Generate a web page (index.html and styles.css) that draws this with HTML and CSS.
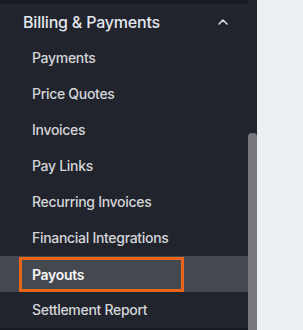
FILE: index.html
```html
<!DOCTYPE html>
<html>
<head>
<meta charset="utf-8">
<link rel="stylesheet" href="styles.css">
</head>
<body>
<div class="page">
  <aside class="sidebar">
    <div class="content">
      <div class="topband"></div>
      <div class="section-head">
        <span class="section-title">Billing &amp; Payments</span>
        <svg class="chev" width="10" height="6" viewBox="0 0 10 6"><path d="M1 5 L5 1 L9 5" fill="none" stroke="#d8dbe0" stroke-width="1.6" stroke-linecap="round" stroke-linejoin="round"/></svg>
      </div>
      <ul class="items">
        <li class="item"><span class="label">Payments</span></li>
        <li class="item"><span class="label">Price Quotes</span></li>
        <li class="item"><span class="label">Invoices</span></li>
        <li class="item"><span class="label">Pay Links</span></li>
        <li class="item"><span class="label">Recurring Invoices</span></li>
        <li class="item"><span class="label">Financial Integrations</span></li>
        <li class="item active"><span class="label boxed">Payouts</span></li>
        <li class="item"><span class="label">Settlement Report</span></li>
      </ul>
      <div class="bottomband"></div>
    </div>
    <div class="track"><div class="thumb"></div></div>
  </aside>
  <main class="main"></main>
</div>
</body>
</html>
```
FILE: styles.css
```css
html, body {
  margin: 0;
  padding: 0;
  width: 303px;
  height: 330px;
  overflow: hidden;
  font-family: Inter, "Noto Sans", sans-serif;
}
.page {
  display: flex;
  height: 330px;
}
.sidebar {
  width: 257px;
  flex: none;
  display: flex;
  background: #21242c;
}
.content {
  width: 248px;
  display: flex;
  flex-direction: column;
}
.topband {
  height: 4px;
  background: #181b21;
}
.section-head {
  height: 36px;
  display: flex;
  align-items: center;
  justify-content: space-between;
  padding: 0 20px 0 23px;
}
.section-title {
  color: #e3e7ee;
  font-size: 16px;
  font-weight: 500;
  letter-spacing: -0.2px;
}
.chev {
  display: block;
  margin-top: -1px;
}
.items {
  list-style: none;
  margin: 0;
  padding: 0;
}
.item {
  height: 36px;
  display: flex;
  align-items: center;
}
.label {
  padding-left: 32px;
  margin-top: -1px;
  color: #d5d6d9;
  font-size: 14px;
  font-weight: 500;
  letter-spacing: -0.3px;
}
.item.active {
  background: #45484f;
}
.label.boxed {
  margin-left: 19px;
  margin-top: 1px;
  padding-left: 10px;
  width: 149px;
  height: 29px;
  display: flex;
  align-items: center;
  border: 3px solid #e8651a;
  color: #f6f6f6;
  font-weight: 600;
}
.bottomband {
  height: 2px;
  background: #181b21;
}
.track {
  width: 9px;
  display: flex;
  flex-direction: column;
}
.thumb {
  margin-top: 133px;
  flex: 1;
  background: #75777c;
  border-radius: 4px 4px 0 0;
}
.main {
  flex: 1;
  background: #eceff4;
}
```
